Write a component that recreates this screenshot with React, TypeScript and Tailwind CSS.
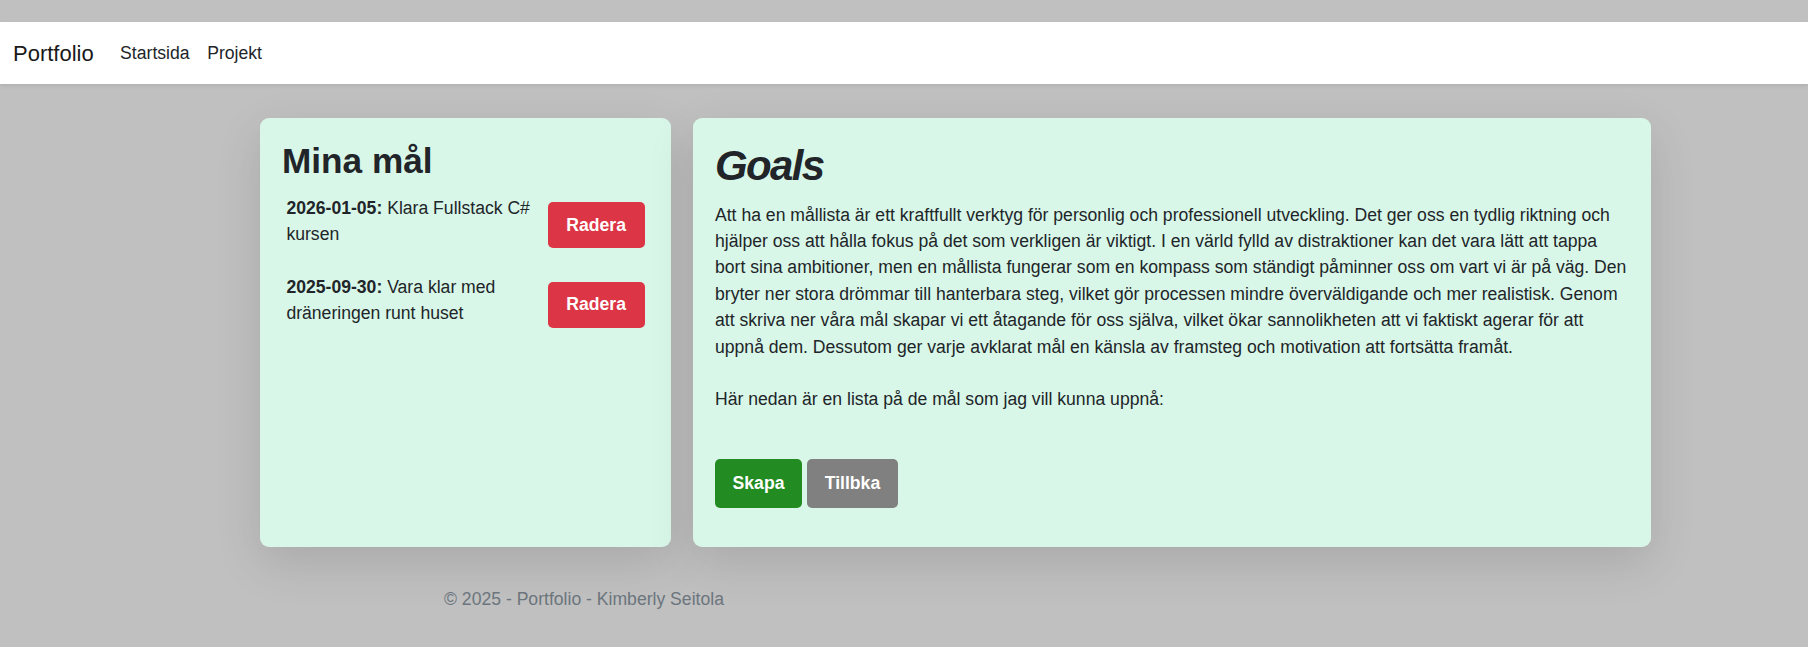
const goals = [
  { id: 1, date: "2026-01-05", text: "Klara Fullstack C# kursen" },
  { id: 2, date: "2025-09-30", text: "Vara klar med dräneringen runt huset" },
];

function Navbar() {
  return (
    <nav className="flex h-[62px] items-center bg-white px-[13px] shadow-[0_2px_4px_rgba(0,0,0,0.08)]">
      <a className="mr-[17.6px] text-[22px] leading-[33px] text-[#1a1a1a]">Portfolio</a>
      <ul className="flex">
        <li>
          <a className="px-[8.8px] text-[17.6px] leading-[26.4px] text-[#212529]">Startsida</a>
        </li>
        <li>
          <a className="px-[8.8px] text-[17.6px] leading-[26.4px] text-[#212529]">Projekt</a>
        </li>
      </ul>
    </nav>
  );
}

function GoalList() {
  return (
    <section className="h-[429px] w-[411px] rounded-[9px] bg-[#d9f7e8] px-[22px] pt-[22px] shadow-[0_1rem_3rem_rgba(0,0,0,0.12)]">
      <h2 className="mb-[8.8px] text-[35.2px] font-bold leading-[42.2px]">Mina mål</h2>
      <ul className="flex flex-col gap-[17.6px] px-[4.4px] pt-[3.7px]">
        {goals.map((goal) => (
          <li key={goal.id} className="flex items-center">
            <p className="mb-[8.8px] flex-1 text-[17.6px] leading-[26.4px]">
              <strong>{goal.date}:</strong> {goal.text}
            </p>
            <button className="ml-[8.8px] h-[46px] w-[97px] rounded-[5px] bg-[#dc3545] text-[17.6px] font-bold text-white">
              Radera
            </button>
          </li>
        ))}
      </ul>
    </section>
  );
}

function GoalsInfo() {
  return (
    <section className="h-[429px] w-[958px] rounded-[9px] bg-[#d9f7e8] px-[22px] pt-[22px] shadow-[0_1rem_3rem_rgba(0,0,0,0.12)]">
      <h1 className="mb-[8.8px] text-[42px] font-bold italic leading-[52.8px] tracking-[-0.04em]">Goals</h1>
      <p className="text-[17.6px] leading-[26.4px]">
        Att ha en mållista är ett kraftfullt verktyg för personlig och professionell utveckling. Det ger oss en
        tydlig riktning och hjälper oss att hålla fokus på det som verkligen är viktigt. I en värld fylld av
        distraktioner kan det vara lätt att tappa bort sina ambitioner, men en mållista fungerar som en kompass som
        ständigt påminner oss om vart vi är på väg. Den bryter ner stora drömmar till hanterbara steg, vilket gör
        processen mindre överväldigande och mer realistisk. Genom att skriva ner våra mål skapar vi ett åtagande
        för oss själva, vilket ökar sannolikheten att vi faktiskt agerar för att uppnå dem. Dessutom ger varje
        avklarat mål en känsla av framsteg och motivation att fortsätta framåt.
        <br />
        <br />
        Här nedan är en lista på de mål som jag vill kunna uppnå:
      </p>
      <div className="mt-[46px] flex gap-[5px]">
        <button className="h-[49.4px] w-[87px] rounded-[5px] bg-[#228b22] text-[17.6px] font-bold text-white">
          Skapa
        </button>
        <button className="h-[49.4px] w-[91px] rounded-[5px] bg-[#808080] text-[17.6px] font-bold text-white">
          Tillbka
        </button>
      </div>
    </section>
  );
}

export default function App() {
  return (
    <div className="min-h-screen bg-[#c0c0c0] pb-10 pt-[22px] font-['Liberation_Sans',Arial,sans-serif] text-[#212529]">
      <Navbar />
      <main className="flex gap-[22px] pl-[260px] pt-[34px]">
        <GoalList />
        <GoalsInfo />
      </main>
      <footer className="pl-[444px] pt-[38.7px] text-[17.6px] leading-[26.4px] text-[#6c757d]">
        © 2025 - Portfolio - Kimberly Seitola
      </footer>
    </div>
  );
}
